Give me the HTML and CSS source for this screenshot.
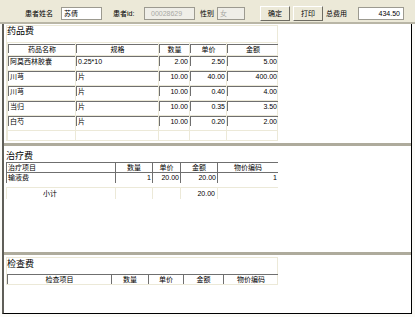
FILE: index.html
```html
<!DOCTYPE html>
<html lang="zh">
<head>
<meta charset="utf-8">
<title>费用明细</title>
<link rel="stylesheet" href="styles.css">
</head>
<body>
<div class="toolbar">
  <span class="lbl l1">患者姓名</span>
  <span class="inp w-name">苏倩</span>
  <span class="lbl l2">患者id:</span>
  <span class="inp dis w-id">00028629</span>
  <span class="lbl l3">性别</span>
  <span class="inp dis w-sex">女</span>
  <span class="btn b1">确定</span>
  <span class="btn b2">打印</span>
  <span class="lbl l4">总费用</span>
  <span class="inp num w-total">434.50</span>
</div>
<div class="frame">
  <section class="sec s1">
    <div class="tbl">
      <div class="title t1">药品费</div>
      <div class="grid g1">
        <div class="c h"><div class="in ctr">药品名称</div></div>
        <div class="c h"><div class="in ctr">规格</div></div>
        <div class="c h"><div class="in ctr">数量</div></div>
        <div class="c h"><div class="in ctr">单价</div></div>
        <div class="c h"><div class="in ctr">金额</div></div>

        <div class="c d"><div class="in">阿莫西林胶囊</div></div>
        <div class="c d"><div class="in">0.25*10</div></div>
        <div class="c d"><div class="in num">2.00</div></div>
        <div class="c d"><div class="in num">2.50</div></div>
        <div class="c d"><div class="in num">5.00</div></div>

        <div class="c d"><div class="in">川芎</div></div>
        <div class="c d"><div class="in">片</div></div>
        <div class="c d"><div class="in num">10.00</div></div>
        <div class="c d"><div class="in num">40.00</div></div>
        <div class="c d"><div class="in num">400.00</div></div>

        <div class="c d"><div class="in">川芎</div></div>
        <div class="c d"><div class="in">片</div></div>
        <div class="c d"><div class="in num">10.00</div></div>
        <div class="c d"><div class="in num">0.40</div></div>
        <div class="c d"><div class="in num">4.00</div></div>

        <div class="c d"><div class="in">当归</div></div>
        <div class="c d"><div class="in">片</div></div>
        <div class="c d"><div class="in num">10.00</div></div>
        <div class="c d"><div class="in num">0.35</div></div>
        <div class="c d"><div class="in num">3.50</div></div>

        <div class="c d"><div class="in">白芍</div></div>
        <div class="c d"><div class="in">片</div></div>
        <div class="c d"><div class="in num">10.00</div></div>
        <div class="c d"><div class="in num">0.20</div></div>
        <div class="c d"><div class="in num">2.00</div></div>

        <div class="c e"></div>
        <div class="c e"></div>
        <div class="c e"></div>
        <div class="c e"></div>
        <div class="c e"></div>
      </div>
    </div>
  </section>

  <section class="sec s2">
    <div class="title t2">治疗费</div>
    <div class="grid g2">
      <div class="c2 h2"><div class="in">治疗项目</div></div>
      <div class="c2 h2"><div class="in ctr">数量</div></div>
      <div class="c2 h2"><div class="in ctr">单价</div></div>
      <div class="c2 h2"><div class="in ctr">金额</div></div>
      <div class="c2 h2"><div class="in ctr">物价编码</div></div>

      <div class="c2 d2"><div class="in">输液费</div></div>
      <div class="c2 d2"><div class="in num">1</div></div>
      <div class="c2 d2"><div class="in num">20.00</div></div>
      <div class="c2 d2"><div class="in num">20.00</div></div>
      <div class="c2 d2"><div class="in num">1</div></div>

      <div class="c st"><span class="sub">小计</span></div>
      <div class="c st"></div>
      <div class="c st"></div>
      <div class="c st num">20.00</div>
      <div class="c st"></div>
    </div>
  </section>

  <section class="sec s3">
    <div class="tbl t3box">
      <div class="title t3">检查费</div>
      <div class="grid g3">
        <div class="c2 h3"><div class="in ctr">检查项目</div></div>
        <div class="c2 h3"><div class="in ctr">数量</div></div>
        <div class="c2 h3"><div class="in ctr">单价</div></div>
        <div class="c2 h3"><div class="in ctr">金额</div></div>
        <div class="c2 h3"><div class="in ctr">物价编码</div></div>
      </div>
    </div>
  </section>
</div>
</body>
</html>
```

FILE: styles.css
```css
* { box-sizing: border-box; }

body {
  margin: 0;
  width: 415px;
  height: 317px;
  overflow: hidden;
  background: #fbfbf8;
  font-family: "Liberation Sans", "Noto Sans CJK SC", sans-serif;
  font-size: 7px;
  color: #000;
}

/* ---------- toolbar ---------- */
.toolbar {
  height: 24px;
  padding-top: 5px;
  display: flex;
  align-items: center;
  background: #ece9d8;
  border-bottom: 2px solid #b9b6a6;
}
.lbl {
  flex-shrink: 0;
  white-space: nowrap;
  line-height: 10px;
}
.l1 { margin-left: 25px; width: 28px; }
.l2 { margin-left: 11px; width: 22px; }
.l3 { margin-left: 5px; width: 14px; }
.l4 { margin-left: 3px; width: 22px; }

.inp {
  flex-shrink: 0;
  height: 13px;
  padding: 0 2px;
  line-height: 11px;
  background: #fff;
  border: 1px solid #9c9a90;
  white-space: nowrap;
}
.inp.dis { background: #efeee8; color: #a9a9a4; }
.inp.num { text-align: right; padding-right: 3px; }
.w-name { margin-left: 8px; width: 41px; }
.w-id { margin-left: 9px; width: 51px; padding-left: 6px; }
.w-sex { margin-left: 3px; width: 28px; }
.w-total { margin-left: 10px; width: 46px; }

.btn {
  flex-shrink: 0;
  width: 30px;
  height: 15px;
  line-height: 13px;
  text-align: center;
  background: #ece9d8;
  border: 1px solid;
  border-color: #fff #6e6c62 #6e6c62 #fff;
}
.b1 { margin-left: 15px; }
.b2 { margin-left: 3px; }

/* ---------- frame ---------- */
.frame {
  margin-left: 2px;
  width: 410px;
  height: 290px;
  background: #fff;
  border-left: 2px solid #5f5e58;
  border-right: 1px solid #000;
  border-bottom: 1px solid #000;
  display: flex;
  flex-direction: column;
}
.sec { padding-left: 2px; }
.s1 { height: 119px; }
.s2 { height: 109px; border-top: 3px solid #aeab9c; }
.s3 { flex: 1; border-top: 3px solid #aeab9c; }

.tbl {
  width: 272px;
  border: 1px solid #ece9d8;
}
.s1 .tbl { margin-top: 1px; }
.t3box { margin-top: 2px; }

.title {
  font-size: 9px;
  line-height: 11px;
  padding-left: 0;
}
.t1 { height: 16px; }
.t2 { padding-top: 5px; height: 16px; }
.t3 { padding-top: 1px; height: 15px; }

.grid { display: grid; }
.g1 { grid-template-columns: 68px 83px 31px 37px 52px; }
.g2 { grid-template-columns: 109px 37px 28px 37px 61px; width: 272px; }
.g3 { grid-template-columns: 104px 37px 35px 40px 55px; }

.c {
  border-top: 1px solid #ece9d8;
  border-left: 1px solid #ece9d8;
}
.c.h { height: 13px; padding: 1px 0 2px 0; }
.c.d { height: 15px; padding: 0 0 4px 0; }
.c.e { height: 10px; }

.in {
  height: 100%;
  border-top: 1px solid #6f6f6f;
  border-left: 1px solid #6f6f6f;
  line-height: 9px;
  padding: 0 1px;
  white-space: nowrap;
  overflow: hidden;
}
.in.ctr { text-align: center; }
.in.num, .num { text-align: right; }

.c2.h2 { height: 10px; }
.c2.d2 { height: 15px; padding-bottom: 4px; }
.c2.d2 .in { line-height: 10px; }
.c.st { height: 12px; line-height: 11px; padding-right: 2px; }
.sub { display: block; padding-left: 36px; }

.c2.h3 { height: 11px; padding-top: 1px; }
```
